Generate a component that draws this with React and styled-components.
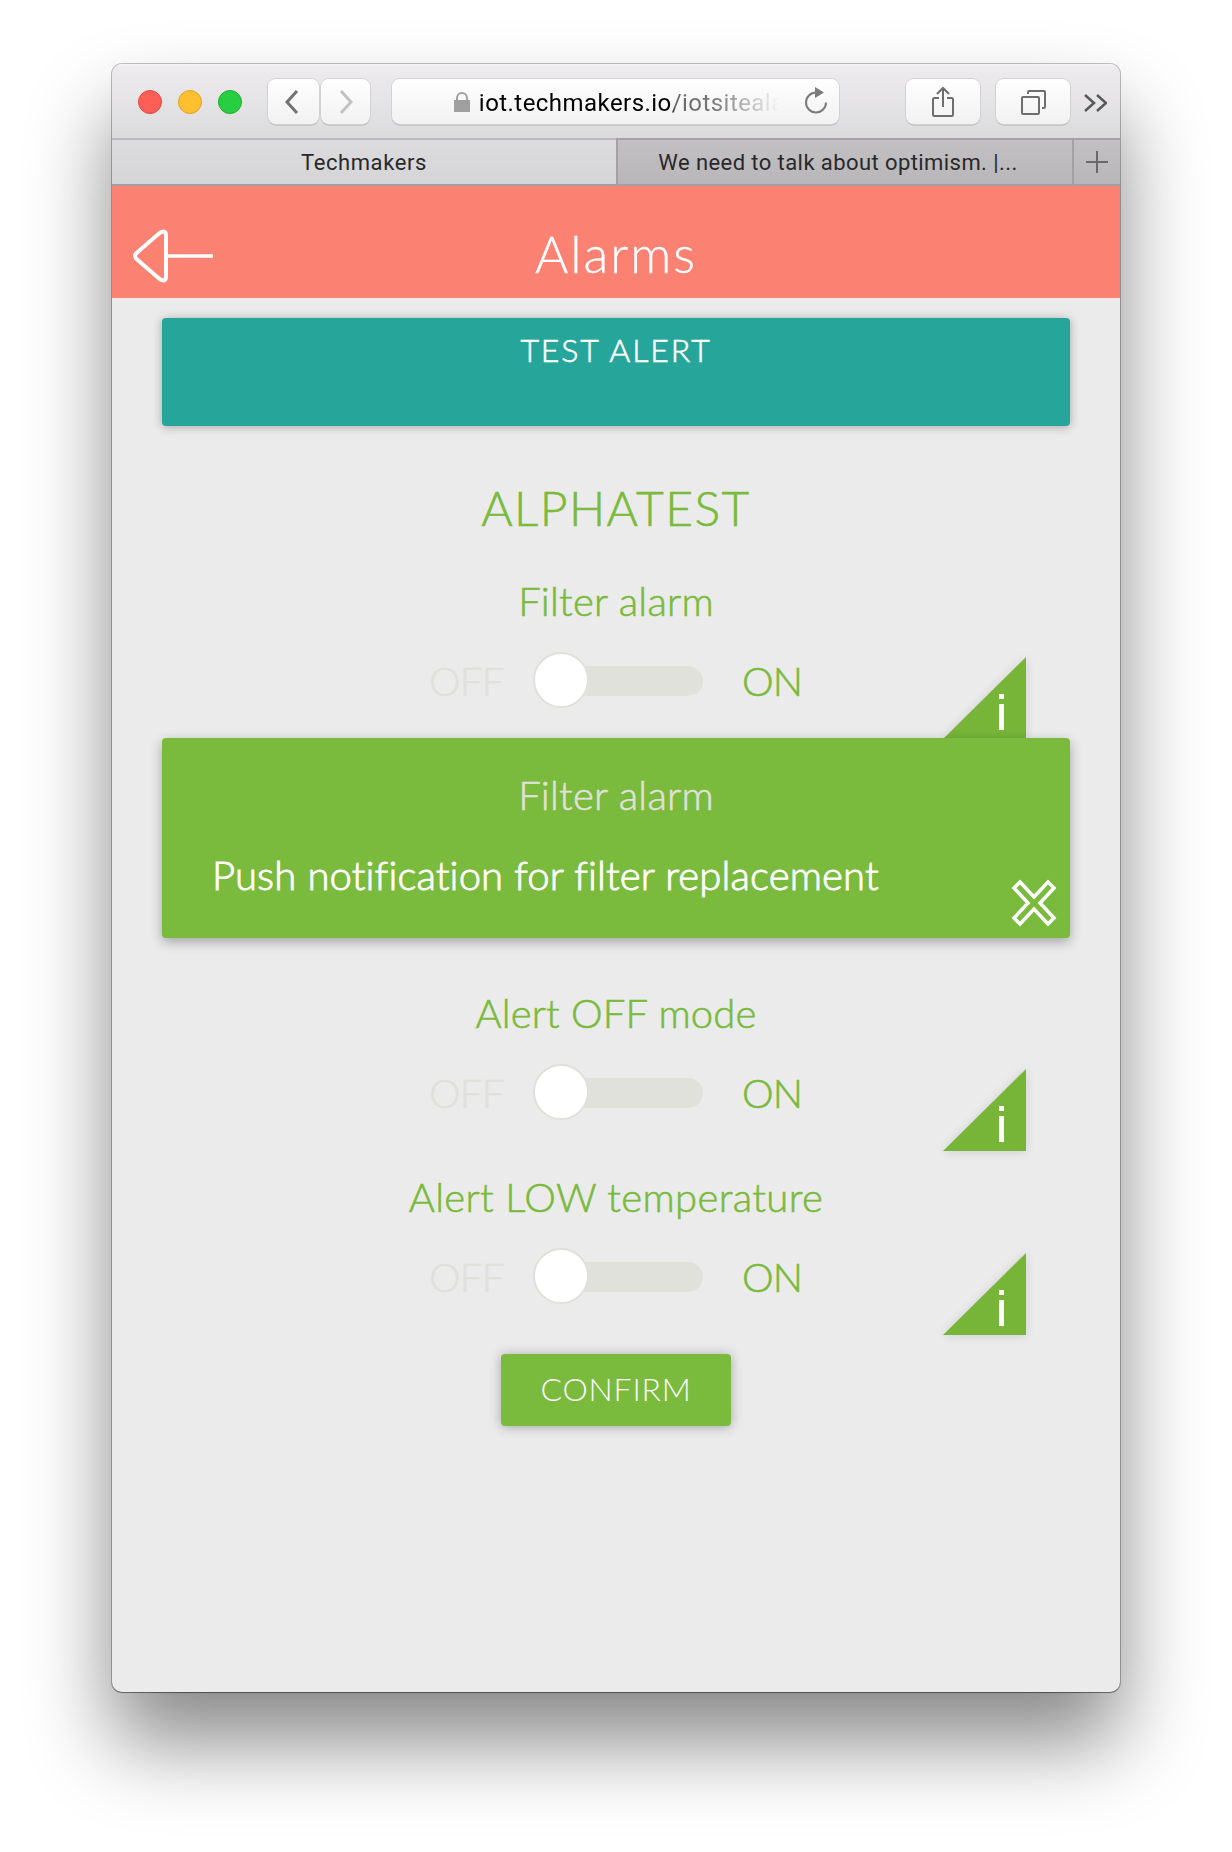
import React from "react";
import styled, { createGlobalStyle } from "styled-components";

const GREEN = "#7aba3c";
const MUTED = "#e0e1da";

const Global = createGlobalStyle`
  * { box-sizing: border-box; }
  html, body { margin: 0; background: #fff; }
  body { overflow: hidden; }
`;

const Desktop = styled.div`
  width: 1232px;
  height: 1852px;
  padding: 64px 112px;
  overflow: hidden;
  background: #fff;
`;

const Window = styled.div`
  width: 1008px;
  height: 1628px;
  border-radius: 10px;
  background: #ebebeb;
  box-shadow: 0 0 0 1px rgba(0, 0, 0, 0.24), 0 1px 1px rgba(0, 0, 0, 0.3),
    0 50px 84px rgba(0, 0, 0, 0.47);
`;

const Chrome = styled.div`
  border-radius: 10px 10px 0 0;
  overflow: hidden;
  font-family: Roboto, "Liberation Sans", sans-serif;
`;

const Toolbar = styled.div`
  display: flex;
  align-items: flex-start;
  height: 74px;
  padding: 15px 13px 0 26px;
  background: linear-gradient(#f6f5f6 0, #edebee 3px, #dcdbdc 100%);
`;

const Lights = styled.div`
  display: flex;
  gap: 16px;
  margin: 11px 25px 0 0;
`;

const Light = styled.span`
  width: 24px;
  height: 24px;
  border-radius: 50%;
  background: ${(p) => p.$fill};
  border: 1px solid ${(p) => p.$edge};
`;

const ToolButton = styled.div`
  display: flex;
  align-items: center;
  justify-content: center;
  width: ${(p) => p.$w}px;
  height: 45px;
  margin-left: ${(p) => p.$gap || 0}px;
  border-radius: 8px;
  background: linear-gradient(#fff, #f1f1f1);
  box-shadow: 0 0 0 1px #d2d1d3, 0 1.5px 0 0 #b0afb1;
`;

const Address = styled(ToolButton)`
  justify-content: flex-start;
  padding-left: 62px;
`;

const Url = styled.span`
  width: 306px;
  margin-left: 9px;
  padding-top: 3px;
  overflow: hidden;
  white-space: nowrap;
  font-size: 24px;
  line-height: 32px;
  letter-spacing: 0.45px;
  color: transparent;
  background: linear-gradient(90deg, #000 192px, #666 196px, #777 235px, rgba(150, 150, 150, 0) 300px);
  -webkit-background-clip: text;
  background-clip: text;
`;

const ReloadIcon = styled.svg`
  margin-left: 18px;
`;

const More = styled.div`
  display: flex;
  margin: 14px 0 0 14px;
`;

const Tabs = styled.div`
  display: flex;
  height: 48px;
  font-size: 22px;
  line-height: 44px;
  text-align: center;
  color: #29282a;
`;

const Tab = styled.div`
  display: flex;
  align-items: center;
  justify-content: center;
  width: ${(p) => p.$w}px;
  padding: ${(p) => (p.$pad !== undefined ? `2px ${p.$pad}px 0 0` : 0)};
  border-top: 2px solid ${(p) => (p.$active ? "#bbb9bd" : "#a3a1a5")};
  border-bottom: 2px solid #a09ea4;
  border-left: ${(p) => (p.$active ? 0 : 2)}px solid #a3a1a5;
  background: ${(p) =>
    p.$active ? "linear-gradient(#dcdbdd, #d5d4d6)" : "linear-gradient(#c2c0c3, #b8b6b9)"};
  letter-spacing: ${(p) => p.$track}px;
  white-space: nowrap;
`;

const Page = styled.main`
  display: flex;
  flex-direction: column;
  align-items: center;
  font-family: Lato, "Open Sans", sans-serif;
  font-weight: 300;
  color: ${GREEN};
  -webkit-text-stroke: 0.6px currentColor;
`;

const Header = styled.header`
  display: grid;
  grid-template-columns: 100px 1fr 100px;
  width: 1008px;
  height: 112px;
  padding: 38px 21px 0;
  background: #fb8172;
  color: #fff;
  -webkit-text-stroke-width: 0.3px;
`;

const Title = styled.h1`
  margin: -1px 0 0;
  text-align: center;
  font-size: 51px;
  font-weight: 300;
  line-height: 62px;
  letter-spacing: 2px;
`;

const Banner = styled.div`
  width: 908px;
  height: 108px;
  margin-top: 20px;
  padding-top: 11px;
  border-radius: 4px;
  background: #26a69a;
  box-shadow: 0 1px 10px rgba(0, 0, 0, 0.3);
  color: #fff;
  text-align: center;
  font-size: 32px;
  line-height: 42px;
  letter-spacing: 1.9px;
`;

const Site = styled.h2`
  margin: 52px 0 22px;
  font-size: 48px;
  font-weight: 300;
  line-height: 60px;
  letter-spacing: 1.4px;
`;

const Setting = styled.section`
  width: 1008px;
  height: 184px;
  padding-top: 17px;
`;

const Label = styled.h3`
  margin: 0;
  text-align: center;
  font-size: 40px;
  font-weight: 300;
  line-height: 48px;
  letter-spacing: ${(p) => p.$track || 0}px;
  color: ${(p) => p.$color || "inherit"};
`;

const Controls = styled.div`
  display: flex;
  align-items: flex-start;
  margin-top: 27px;
  padding: 0 94px 0 317px;
`;

const State = styled.span`
  width: ${(p) => p.$w}px;
  margin-top: 5px;
  font-size: 40px;
  line-height: 48px;
  letter-spacing: -0.8px;
  white-space: nowrap;
  color: ${(p) => p.$color};
`;

const Track = styled.div`
  display: flex;
  align-items: center;
  width: 168px;
  height: 30px;
  margin: 14px 39px 0 0;
  border-radius: 15px;
  background: ${MUTED};
`;

const Thumb = styled.div`
  width: 56px;
  height: 56px;
  margin: -2px 0 0 -2px;
  flex: none;
  border: 2px solid ${MUTED};
  border-radius: 50%;
  background: #fff;
`;

const InfoIcon = styled.svg`
  margin: 5px 0 0 auto;
  overflow: visible;
  filter: drop-shadow(0 1px 5px rgba(0, 0, 0, 0.12));
`;

const Notice = styled.section`
  position: relative;
  width: 908px;
  height: 200px;
  margin: -6px 0 34px;
  padding: 33px 13px 0 50px;
  border-radius: 4px;
  background: ${GREEN};
  box-shadow: 0 4px 12px rgba(0, 0, 0, 0.3);
  color: #fff;
`;

const NoticeTitle = styled(Label)`
  padding-right: 37px;
`;

const NoticeBody = styled.div`
  display: flex;
  justify-content: space-between;
  align-items: flex-start;
  margin-top: 32px;
`;

const NoticeText = styled.p`
  margin: 0;
  font-size: 40px;
  line-height: 48px;
  letter-spacing: 0.15px;
  white-space: nowrap;
  -webkit-text-stroke-width: 0.9px;
`;

const CloseIcon = styled.svg`
  margin-top: 28px;
`;

const Confirm = styled.button`
  width: 230px;
  height: 72px;
  margin-top: 14px;
  padding: 0 0 3px;
  border: 0;
  border-radius: 4px;
  background: ${GREEN};
  box-shadow: 0 1px 12px rgba(0, 0, 0, 0.3);
  color: #fff;
  font: 300 32px/66px Lato, "Open Sans", sans-serif;
  letter-spacing: 0.8px;
  -webkit-text-stroke-width: 0;
`;

function AlarmSetting({ name, track }) {
  return (
    <Setting>
      <Label $track={track}>{name}</Label>
      <Controls>
        <State $w={106} $color={MUTED}>OFF</State>
        <Track><Thumb /></Track>
        <State $w={70} $color={GREEN}>ON</State>
        <InfoIcon width="83" height="82" viewBox="0 0 83 82">
          <path d="M83 0V82H0Z" fill="#77b539" />
          <path d="M56 37h5v5h-5zM56 47h5v26h-5z" fill="#fff" />
        </InfoIcon>
      </Controls>
    </Setting>
  );
}

function BrowserChrome() {
  return (
    <Chrome>
      <Toolbar>
        <Lights>
          <Light $fill="#ff5f57" $edge="#e2463f" />
          <Light $fill="#ffbf2f" $edge="#e0a028" />
          <Light $fill="#28ce42" $edge="#1dac2a" />
        </Lights>
        <ToolButton $w={51} $gap={1}>
          <svg width="18" height="26" viewBox="0 0 18 26" fill="none" stroke="#737373" strokeWidth="3">
            <path d="M13 2 3 13l10 11" />
          </svg>
        </ToolButton>
        <ToolButton $w={49} $gap={2}>
          <svg width="16" height="26" viewBox="0 0 16 26" fill="none" stroke="#c2c2c2" strokeWidth="3">
            <path d="m4 2 10 11L4 24" />
          </svg>
        </ToolButton>
        <Address $w={448} $gap={22}>
          <svg width="16" height="20" viewBox="0 0 16 20">
            <path d="M3 9V6a5 5 0 0 1 10 0v3" fill="none" stroke="#a0a0a0" strokeWidth="2" />
            <path d="M0 8h16v12H0z" fill="#a0a0a0" />
          </svg>
          <Url>iot.techmakers.io/iotsiteala</Url>
          <ReloadIcon width="26" height="30" viewBox="0 0 26 30">
            <path d="M13 5.500a10 10 0 1 0 10 10" fill="none" stroke="#7b7b7b" strokeWidth="2" />
            <path d="M12 0v11l9-5.500z" fill="#7b7b7b" />
          </ReloadIcon>
        </Address>
        <ToolButton $w={74} $gap={67}>
          <svg width="22" height="32" viewBox="0 0 22 32" fill="none" stroke="#6e6e6e" strokeWidth="2">
            <path d="M7 12H2.500Q1 12 1 13.500v15Q1 30 2.500 30h17q1.500 0 1.500-1.500v-15Q21 12 19.500 12H15M11 21V2M5 8l6-6 6 6" />
          </svg>
        </ToolButton>
        <ToolButton $w={74} $gap={16}>
          <svg width="26" height="26" viewBox="0 0 26 26" fill="none" stroke="#6e6e6e" strokeWidth="2">
            <rect x="2" y="8" width="17" height="17" rx="1" />
            <path d="M8 5V3q0-1 1-1h15q1 0 1 1v15q0 1-1 1h-2" />
          </svg>
        </ToolButton>
        <More>
          <svg width="23" height="20" viewBox="0 0 23 20" fill="none" stroke="#58575a" strokeWidth="2.500">
            <path d="m1 2 9 8-9 8M13 2l9 8-9 8" />
          </svg>
        </More>
      </Toolbar>
      <Tabs>
        <Tab $active $w={504} $pad={0} $track={0.6}>Techmakers</Tab>
        <Tab $w={456} $pad={14} $track={0.42}>We need to talk about optimism. |...</Tab>
        <Tab $w={48}>
          <svg width="22" height="22" viewBox="0 0 22 22" fill="none" stroke="#69686b" strokeWidth="2">
            <path d="M11 0v22M0 11h22" />
          </svg>
        </Tab>
      </Tabs>
    </Chrome>
  );
}

export default function App() {
  return (
    <Desktop>
      <Global />
      <Window>
        <BrowserChrome />
        <Page>
          <Header>
            <svg width="80" height="64" viewBox="0 0 80 64" fill="none" stroke="#fff">
              <path d="M3.500 29 26 9.500q7-5 7 2.500v40q0 7.500-7 2.500L3.500 35q-3-3 0-6Z" strokeWidth="4" />
              <path d="M33 32h47" strokeWidth="3.500" />
            </svg>
            <Title>Alarms</Title>
          </Header>
          <Banner>TEST ALERT</Banner>
          <Site>ALPHATEST</Site>
          <AlarmSetting name="Filter alarm" track={0.25} />
          <Notice>
            <NoticeTitle $color={MUTED} $track={0.25}>Filter alarm</NoticeTitle>
            <NoticeBody>
              <NoticeText>Push notification for filter replacement</NoticeText>
              <CloseIcon width="46" height="48" viewBox="0 0 46 48" fill="none" stroke="#fff" strokeWidth="3.500">
                <path d="M9 3 23 18 37 3l6 6-14 15 14 15-6 6-14-15L9 45l-6-6 14-15L3 9Z" />
              </CloseIcon>
            </NoticeBody>
          </Notice>
          <AlarmSetting name="Alert OFF mode" track={0.15} />
          <AlarmSetting name="Alert LOW temperature" track={0.35} />
          <Confirm>CONFIRM</Confirm>
        </Page>
      </Window>
    </Desktop>
  );
}
